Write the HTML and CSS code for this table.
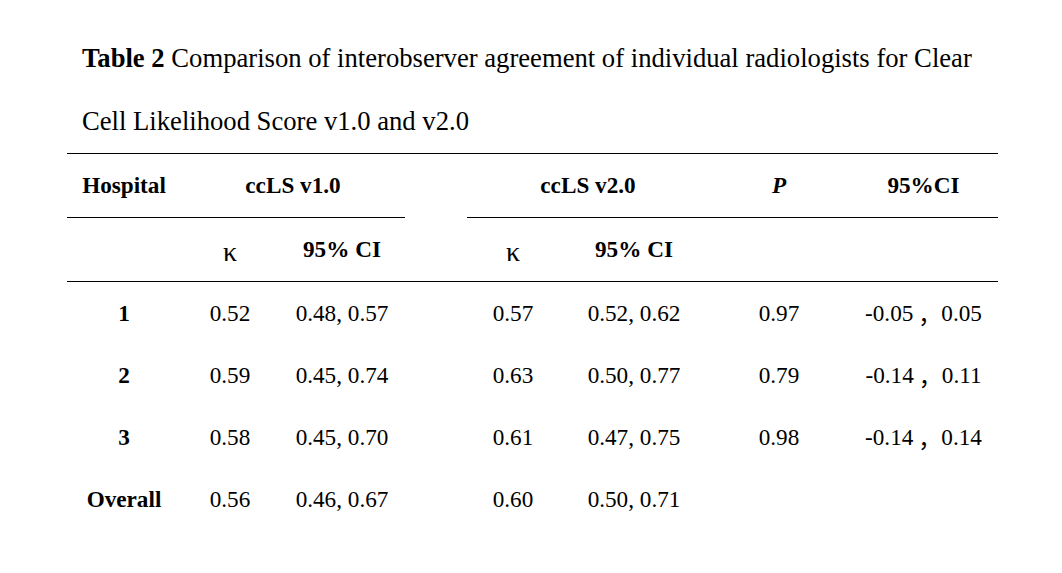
FILE: index.html
```html
<!DOCTYPE html>
<html lang="en">
<head>
<meta charset="utf-8">
<title>Table 2</title>
<link rel="stylesheet" href="styles.css">
</head>
<body>
<div class="page">
  <p class="caption"><b>Table 2</b> Comparison of interobserver agreement of individual radiologists for Clear Cell Likelihood Score v1.0 and v2.0</p>
  <div class="tbl">
    <div class="h1 b">Hospital</div>
    <div class="h1 b span2">ccLS v1.0</div>
    <div class="h1 gap"></div>
    <div class="h1 b span2">ccLS v2.0</div>
    <div class="h1 b"><i>P</i></div>
    <div class="h1 b">95%CI</div>

    <div class="h2"></div>
    <div class="h2"><span class="k">κ</span></div>
    <div class="h2 b">95% CI</div>
    <div class="h2"></div>
    <div class="h2"><span class="k">κ</span></div>
    <div class="h2 b">95% CI</div>
    <div class="h2"></div>
    <div class="h2"></div>

    <div class="c b">1</div><div class="c">0.52</div><div class="c">0.48, 0.57</div><div class="c"></div><div class="c">0.57</div><div class="c">0.52, 0.62</div><div class="c">0.97</div><div class="c">-0.05<span class="fw">，</span>0.05</div>
    <div class="c b">2</div><div class="c">0.59</div><div class="c">0.45, 0.74</div><div class="c"></div><div class="c">0.63</div><div class="c">0.50, 0.77</div><div class="c">0.79</div><div class="c">-0.14<span class="fw">，</span>0.11</div>
    <div class="c b">3</div><div class="c">0.58</div><div class="c">0.45, 0.70</div><div class="c"></div><div class="c">0.61</div><div class="c">0.47, 0.75</div><div class="c">0.98</div><div class="c">-0.14<span class="fw">，</span>0.14</div>
    <div class="c b">Overall</div><div class="c">0.56</div><div class="c">0.46, 0.67</div><div class="c"></div><div class="c">0.60</div><div class="c">0.50, 0.71</div><div class="c"></div><div class="c"></div>
  </div>
</div>
</body>
</html>
```
FILE: styles.css
```css
html, body {
  margin: 0;
  padding: 0;
  background: #fff;
}
body {
  font-family: "Liberation Serif", "Times New Roman", serif;
  color: #000;
}
.page {
  padding: 27px 0 0 67px;
}
.caption {
  margin: 0;
  padding-left: 15px;
  width: 910px;
  font-size: 26.65px;
  line-height: 63px;
}
.tbl {
  display: grid;
  grid-template-columns: 114px 98px 126px 62px 92px 150px 140px 149px;
  width: 931px;
  border-top: 1px solid #000;
  font-size: 23.2px;
}
.tbl > div {
  display: flex;
  align-items: center;
  justify-content: center;
  box-sizing: border-box;
  white-space: nowrap;
}
.h1, .h2 {
  height: 64px;
  border-bottom: 1px solid #000;
}
.h1.gap {
  border-bottom-color: transparent;
}
.c {
  height: 62px;
}
.span2 {
  grid-column: span 2;
}
.b {
  font-weight: bold;
}
.k {
  font-size: 28px;
  line-height: 1;
  position: relative;
  top: 2px;
}
.fw {
  font-family: "Noto Sans CJK SC", sans-serif;
  font-size: 23.2px;
  box-sizing: border-box;
  width: 28px;
  padding-left: 5px;
  display: inline-block;
  text-align: left;
}
```
